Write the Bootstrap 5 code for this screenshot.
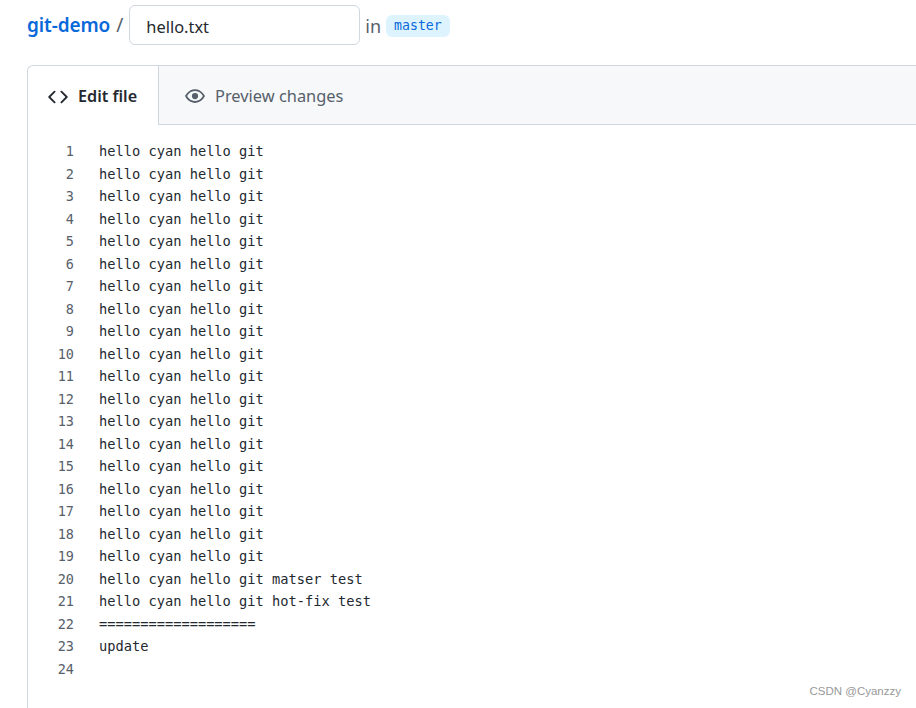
<!DOCTYPE html>
<html lang="en"><head><meta charset="utf-8"><title>Edit hello.txt</title>
<link href="https://cdn.jsdelivr.net/npm/bootstrap@5.3.0/dist/css/bootstrap.min.css" rel="stylesheet">
<style>
html,body{height:708px;overflow:hidden;background:#fff}
body{font-family:"Noto Sans","Open Sans",sans-serif;color:#24292f}
.pagewrap{padding:5px 0 0 27px;width:916px;height:708px;display:flex;flex-direction:column}
.crumb{height:40px;font-size:19px;color:#57606a;flex:none}
.repo{font-weight:600;color:#0969da;text-decoration:none;font-size:19px;letter-spacing:-.1px}
.slash{margin:0 6px 0 6px}
.fname{width:231px;height:40px;border:1px solid #d0d7de;border-radius:6px;padding:2px 16px 0;font-size:16.4px;color:#24292f;background:#fff;outline:0}
.inword{margin:2px 5px 0 5px;font-size:18px}
.branch{font:13.2px/16px "DejaVu Sans Mono",monospace;color:#0969da;background:#ddf4ff;border-radius:6px;padding:3px 8px;margin-top:2px}
.editor{margin-top:20px;flex:1;min-height:0;border:1px solid #d0d7de;border-width:1px 0 0 1px;border-radius:6px 0 0 0}
.tabbar{height:59px;background:#f6f8fa;border-bottom:1px solid #d0d7de;border-radius:6px 0 0 0}
.tabx{display:flex;align-items:center;white-space:nowrap;font-size:16.4px;color:#57606a;padding-top:2px}
.tabx.on{background:#fff;font-weight:600;color:#24292f;border-right:1px solid #d0d7de;height:59px;width:131px;padding-left:20px;gap:10px;border-radius:6px 0 0 0;font-size:16.2px}
.tabx.off{padding-left:26px;gap:10px}
.code{padding-top:15px;font:13.7px/22.5px "DejaVu Sans Mono","Liberation Mono",monospace}
.ln{width:46px;text-align:right;color:#57606a;flex:none;font-size:13.5px}
.tx{padding-left:25px;white-space:pre;color:#24292f;min-height:22.5px}
.wmk{position:absolute;right:15px;top:685px;font:11.5px "Liberation Sans",sans-serif;color:#999}
</style></head><body>
<div class="pagewrap">
<div class="crumb d-flex align-items-center"><a class="repo" href="#">git-demo</a><span class="slash">/</span><input class="fname" value="hello.txt" aria-label="File name"><span class="inword">in</span><span class="branch">master</span></div>
<div class="editor">
<div class="tabbar d-flex">
<div class="tabx on"><svg width="20" height="20" viewBox="0 0 16 16" fill="#24292f"><path d="M4.72 3.22a.75.75 0 0 1 1.06 1.06L2.06 8l3.72 3.72a.75.75 0 1 1-1.06 1.06L.47 8.53a.75.75 0 0 1 0-1.06Zm6.56 0a.75.75 0 1 0-1.06 1.06L13.94 8l-3.72 3.72a.75.75 0 1 0 1.06 1.06l4.25-4.25a.75.75 0 0 0 0-1.06Z"/></svg>Edit file</div>
<div class="tabx off"><svg width="20" height="20" viewBox="0 0 16 16" fill="#57606a"><path d="M1.68 8c.3.54.9 1.4 1.76 2.2C4.5 11.2 6 12 8 12s3.500-.8 4.560-1.800A10 10 0 0014.320 8a10 10 0 00-1.760-2.200C11.500 4.800 10 4 8 4s-3.500.8-4.560 1.800A10 10 0 001.680 8zM0 8s2.500-5.500 8-5.500S16 8 16 8s-2.500 5.500-8 5.500S0 8 0 8zm8 2.500a2.500 2.500 0 100-5 2.500 2.500 0 000 5z"/></svg>Preview changes</div>
</div>
<div class="code" id="c"></div>
</div></div>
<div class="wmk">CSDN @Cyanzzy</div>
<script>
var L=[];for(var i=0;i<19;i++)L.push("hello cyan hello git");
L.push("hello cyan hello git matser test","hello cyan hello git hot-fix test","===================","update","");
document.getElementById('c').innerHTML=L.map(function(t,i){return '<div class="d-flex"><div class="ln">'+(i+1)+'</div><div class="tx">'+t+'</div></div>'}).join('');
</script>
<script src="https://cdn.jsdelivr.net/npm/bootstrap@5.3.0/dist/js/bootstrap.bundle.min.js"></script>
</body></html>
